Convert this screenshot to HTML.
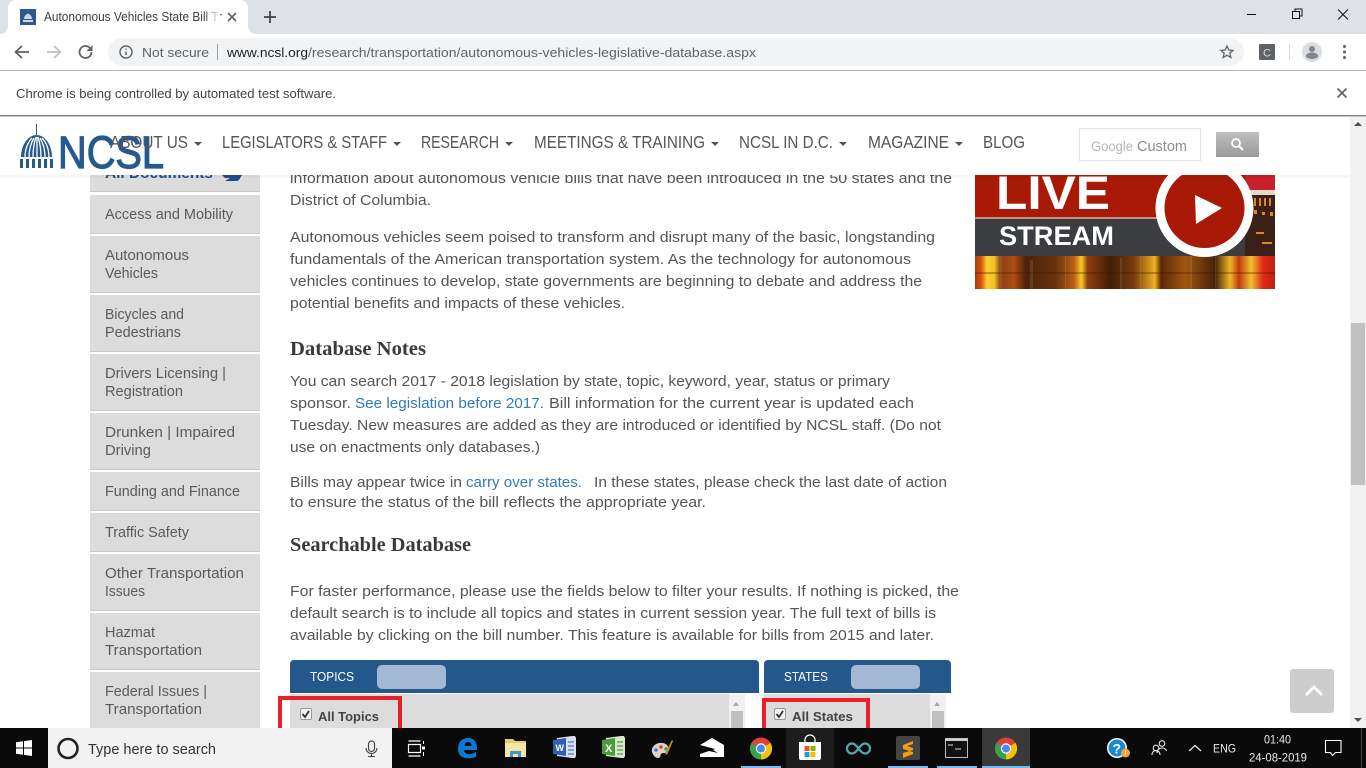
<!DOCTYPE html>
<html lang="en"><head><meta charset="utf-8"><title>Autonomous Vehicles State Bill Tracking</title>
<style>
html,body{margin:0;padding:0;width:1366px;height:768px;overflow:hidden;background:#fff}
svg{display:block}
text{font-family:"Liberation Sans",Arial,sans-serif;white-space:pre}
.b{font-size:15px;fill:#555}
.l{fill:#337ab7}
.s{font-size:14.5px;fill:#5a5a5a}
.h{font-family:"Liberation Serif",serif;font-weight:bold;font-size:20px;fill:#3a3a3a}
.n{font-size:17.5px;fill:#555}
.u{font-size:13px;fill:#5f6368}
.t{fill:#e8e8e8;font-size:12px}
</style></head><body>
<svg width="1366" height="768" viewBox="0 0 1366 768" xmlns="http://www.w3.org/2000/svg">
<defs>
<linearGradient id="refl" x1="0" x2="1" y1="0" y2="0">
<stop offset="0" stop-color="#a83c08"/><stop offset=".02" stop-color="#d85010"/><stop offset=".04" stop-color="#f8d030"/><stop offset=".065" stop-color="#f0c020"/><stop offset=".085" stop-color="#8a4010"/><stop offset=".13" stop-color="#b04c14"/><stop offset=".17" stop-color="#4c220a"/><stop offset=".27" stop-color="#6a320e"/><stop offset=".33" stop-color="#b86014"/><stop offset=".355" stop-color="#f8c828"/><stop offset=".375" stop-color="#903e0e"/><stop offset=".45" stop-color="#421e06"/><stop offset=".53" stop-color="#7a3c0e"/><stop offset=".6" stop-color="#f0b020"/><stop offset=".62" stop-color="#5a2806"/><stop offset=".7" stop-color="#a0560e"/><stop offset=".8" stop-color="#46220a"/><stop offset=".85" stop-color="#f0b824"/><stop offset=".88" stop-color="#c03a10"/><stop offset=".92" stop-color="#f0c030"/><stop offset=".96" stop-color="#e02818"/><stop offset="1" stop-color="#c02010"/>
</linearGradient>
<linearGradient id="btn" x1="0" x2="0" y1="0" y2="1"><stop offset="0" stop-color="#c0c0c0"/><stop offset="1" stop-color="#9a9a9a"/></linearGradient>
<linearGradient id="fade" x1="0" x2="1" y1="0" y2="0"><stop offset="0" stop-color="#fff" stop-opacity="0"/><stop offset="1" stop-color="#fff"/></linearGradient>
<clipPath id="liveclip"><rect x="975" y="175" width="300" height="114"/></clipPath>
</defs>

<!-- page -->
<rect x="0" y="116" width="1366" height="612" fill="#fff"/>

<!-- sidebar -->
<g fill="#dcdcdc">
<rect x="90" y="150" width="170" height="42"/>
<rect x="90" y="195" width="170" height="39"/>
<rect x="90" y="236" width="170" height="57"/>
<rect x="90" y="295" width="170" height="57"/>
<rect x="90" y="354" width="170" height="57"/>
<rect x="90" y="413" width="170" height="57"/>
<rect x="90" y="472" width="170" height="39"/>
<rect x="90" y="513" width="170" height="39"/>
<rect x="90" y="554" width="170" height="57"/>
<rect x="90" y="613" width="170" height="57"/>
<rect x="90" y="672" width="170" height="56"/>
</g>
<g fill="#c9c9c9">
<rect x="90" y="191" width="170" height="1"/><rect x="90" y="233" width="170" height="1"/><rect x="90" y="292" width="170" height="1"/><rect x="90" y="351" width="170" height="1"/><rect x="90" y="410" width="170" height="1"/><rect x="90" y="469" width="170" height="1"/><rect x="90" y="510" width="170" height="1"/><rect x="90" y="551" width="170" height="1"/><rect x="90" y="610" width="170" height="1"/><rect x="90" y="669" width="170" height="1"/>
</g>
<text x="105" y="178" font-size="15" font-weight="bold" fill="#1f4e84" textLength="108" lengthAdjust="spacingAndGlyphs">All Documents</text>
<path d="M222 175h20l-3 5-2 1h-12l5-3h-5z" fill="#1f4e84"/>
<g class="s">
<text class="s" x="105" y="219" textLength="128" lengthAdjust="spacingAndGlyphs">Access and Mobility</text>
<text class="s" x="105" y="260" textLength="84" lengthAdjust="spacingAndGlyphs">Autonomous</text>
<text class="s" x="105" y="278" textLength="53" lengthAdjust="spacingAndGlyphs">Vehicles</text>
<text class="s" x="105" y="319" textLength="79" lengthAdjust="spacingAndGlyphs">Bicycles and</text>
<text class="s" x="105" y="337" textLength="76" lengthAdjust="spacingAndGlyphs">Pedestrians</text>
<text class="s" x="105" y="378" textLength="121" lengthAdjust="spacingAndGlyphs">Drivers Licensing |</text>
<text class="s" x="105" y="396" textLength="78" lengthAdjust="spacingAndGlyphs">Registration</text>
<text class="s" x="105" y="437" textLength="130" lengthAdjust="spacingAndGlyphs">Drunken | Impaired</text>
<text class="s" x="105" y="455" textLength="46" lengthAdjust="spacingAndGlyphs">Driving</text>
<text class="s" x="105" y="496" textLength="135" lengthAdjust="spacingAndGlyphs">Funding and Finance</text>
<text class="s" x="105" y="537" textLength="84" lengthAdjust="spacingAndGlyphs">Traffic Safety</text>
<text class="s" x="105" y="578" textLength="139" lengthAdjust="spacingAndGlyphs">Other Transportation</text>
<text class="s" x="105" y="596" textLength="40" lengthAdjust="spacingAndGlyphs">Issues</text>
<text class="s" x="105" y="637" textLength="50" lengthAdjust="spacingAndGlyphs">Hazmat</text>
<text class="s" x="105" y="655" textLength="97" lengthAdjust="spacingAndGlyphs">Transportation</text>
<text class="s" x="105" y="696" textLength="102" lengthAdjust="spacingAndGlyphs">Federal Issues |</text>
<text class="s" x="105" y="714" textLength="97" lengthAdjust="spacingAndGlyphs">Transportation</text>
</g>

<!-- body -->
<text class="b" x="290" y="183" textLength="662" lengthAdjust="spacingAndGlyphs">information about autonomous vehicle bills that have been introduced in the 50 states and the</text>
<text class="b" x="290" y="205" textLength="141" lengthAdjust="spacingAndGlyphs">District of Columbia.</text>
<text class="b" x="290" y="242" textLength="645" lengthAdjust="spacingAndGlyphs">Autonomous vehicles seem poised to transform and disrupt many of the basic, longstanding</text>
<text class="b" x="290" y="264" textLength="621" lengthAdjust="spacingAndGlyphs">fundamentals of the American transportation system. As the technology for autonomous</text>
<text class="b" x="290" y="286" textLength="632" lengthAdjust="spacingAndGlyphs">vehicles continues to develop, state governments are beginning to debate and address the</text>
<text class="b" x="290" y="308" textLength="335" lengthAdjust="spacingAndGlyphs">potential benefits and impacts of these vehicles.</text>
<text class="h" x="290" y="355" textLength="136" lengthAdjust="spacingAndGlyphs">Database Notes</text>
<text class="b" x="290" y="386" textLength="600" lengthAdjust="spacingAndGlyphs">You can search 2017 - 2018 legislation by state, topic, keyword, year, status or primary</text>
<text class="b" x="290" y="408" textLength="61" lengthAdjust="spacingAndGlyphs">sponsor.</text>
<text class="b l" x="355" y="408" textLength="189" lengthAdjust="spacingAndGlyphs">See legislation before 2017.</text>
<text class="b" x="549" y="408" textLength="365" lengthAdjust="spacingAndGlyphs">Bill information for the current year is updated each</text>
<text class="b" x="290" y="430" textLength="651" lengthAdjust="spacingAndGlyphs">Tuesday. New measures are added as they are introduced or identified by NCSL staff. (Do not</text>
<text class="b" x="290" y="452" textLength="250" lengthAdjust="spacingAndGlyphs">use on enactments only databases.)</text>
<text class="b" x="290" y="487" textLength="172" lengthAdjust="spacingAndGlyphs">Bills may appear twice in</text>
<text class="b l" x="466" y="487" textLength="116" lengthAdjust="spacingAndGlyphs">carry over states.</text>
<text class="b" x="594" y="487" textLength="353" lengthAdjust="spacingAndGlyphs">In these states, please check the last date of action</text>
<text class="b" x="290" y="507" textLength="416" lengthAdjust="spacingAndGlyphs">to ensure the status of the bill reflects the appropriate year.</text>
<text class="h" x="290" y="551" textLength="181" lengthAdjust="spacingAndGlyphs">Searchable Database</text>
<text class="b" x="290" y="596" textLength="669" lengthAdjust="spacingAndGlyphs">For faster performance, please use the fields below to filter your results. If nothing is picked, the</text>
<text class="b" x="290" y="618" textLength="646" lengthAdjust="spacingAndGlyphs">default search is to include all topics and states in current session year. The full text of bills is</text>
<text class="b" x="290" y="640" textLength="644" lengthAdjust="spacingAndGlyphs">available by clicking on the bill number. This feature is available for bills from 2015 and later.</text>

<!-- filter panels -->
<path d="M290 693v-29a4 4 0 0 1 4-4h461a4 4 0 0 1 4 4v29z" fill="#24578c"/>
<path d="M764 693v-29a4 4 0 0 1 4-4h179a4 4 0 0 1 4 4v29z" fill="#24578c"/>
<rect x="377" y="665" width="69" height="24" rx="5" fill="#a3b8d3"/>
<rect x="851" y="665" width="69" height="24" rx="5" fill="#a3b8d3"/>
<text x="310" y="681" font-size="13" fill="#fff" textLength="44" lengthAdjust="spacingAndGlyphs">TOPICS</text>
<text x="784" y="681" font-size="13" fill="#fff" textLength="44" lengthAdjust="spacingAndGlyphs">STATES</text>
<rect x="290" y="694" width="439" height="34" fill="#dcdcdc"/>
<rect x="729" y="694" width="16" height="34" fill="#f1f1f1"/>
<rect x="731" y="711" width="12" height="17" fill="#c0c0c0"/>
<path d="M733 706l3-4 3 4z" fill="#a8a8a8"/>
<rect x="764" y="694" width="166" height="34" fill="#dcdcdc"/>
<rect x="930" y="694" width="16" height="34" fill="#f1f1f1"/>
<rect x="932" y="711" width="12" height="17" fill="#c0c0c0"/>
<path d="M934 706l3-4 3 4z" fill="#a8a8a8"/>
<rect x="300.500" y="708.500" width="11" height="11" rx="1.500" fill="#f2f2f2" stroke="#9a9a9a"/>
<path d="M302.500 714l2.500 3 4-6" fill="none" stroke="#333" stroke-width="1.800"/>
<rect x="774.500" y="708.500" width="11" height="11" rx="1.500" fill="#f2f2f2" stroke="#9a9a9a"/>
<path d="M776.500 714l2.500 3 4-6" fill="none" stroke="#333" stroke-width="1.800"/>
<text x="318" y="721" font-size="13" font-weight="bold" fill="#444" textLength="61" lengthAdjust="spacingAndGlyphs">All Topics</text>
<text x="792" y="721" font-size="13" font-weight="bold" fill="#444" textLength="61" lengthAdjust="spacingAndGlyphs">All States</text>
<rect x="280" y="698" width="120" height="32" fill="none" stroke="#e8202a" stroke-width="4"/>
<rect x="764" y="700" width="104" height="30" fill="none" stroke="#e8202a" stroke-width="4"/>

<!-- live stream -->
<g clip-path="url(#liveclip)">
<rect x="975" y="175" width="300" height="42" fill="#a81a06"/>
<rect x="1245" y="175" width="30" height="15" fill="#c8202a"/>
<rect x="975" y="217" width="240" height="2" fill="#c89088"/>
<rect x="975" y="219" width="280" height="37" fill="#3b3d40"/>
<rect x="1245" y="190" width="30" height="66" fill="#3a2018"/>
<rect x="1250" y="190" width="25" height="5" fill="#e8d8c8"/>
<g fill="#e08820"><rect x="1254" y="198" width="2" height="8"/><rect x="1259" y="198" width="2" height="8"/><rect x="1264" y="198" width="2" height="8"/><rect x="1269" y="198" width="2" height="8"/><rect x="1254" y="210" width="3" height="4"/><rect x="1262" y="212" width="3" height="3"/><rect x="1270" y="212" width="3" height="4"/><rect x="1256" y="232" width="8" height="2"/><rect x="1262" y="242" width="10" height="2"/></g>
<rect x="975" y="256" width="300" height="33" fill="url(#refl)"/>
<g fill="#fff" opacity=".1"><rect x="1000" y="256" width="2" height="33"/><rect x="1030" y="260" width="3" height="29"/><rect x="1065" y="256" width="1" height="33"/><rect x="1120" y="258" width="2" height="31"/><rect x="1140" y="256" width="1" height="33"/><rect x="1190" y="256" width="2" height="33"/><rect x="1215" y="256" width="1" height="33"/></g>
<rect x="975" y="272" width="300" height="2" fill="#401800" opacity=".3"/>
<text x="996" y="209" font-size="47" font-weight="bold" fill="#fff" textLength="114" lengthAdjust="spacingAndGlyphs">LIVE</text>
<text x="999" y="245" font-size="27" font-weight="bold" fill="#fff" textLength="115" lengthAdjust="spacingAndGlyphs">STREAM</text>
<circle cx="1204.500" cy="208" r="44.500" fill="#a81a06" stroke="#fff" stroke-width="9"/>
<path d="M1195 195l27 13-26 16z" fill="#fff"/>
</g>

<!-- header -->
<rect x="0" y="175" width="1350" height="3" fill="#000" opacity=".03"/>
<rect x="0" y="116" width="1350" height="59" fill="#fff"/>
<!-- logo -->
<g fill="#265a8f">
<rect x="36" y="124" width="1" height="11"/>
<path d="M21 157a15.500 22 0 0 1 31 0z"/>
</g>
<g stroke="#fff" stroke-width="1.300"><path d="M25 157c0-8 3-15 7-19M29 157c0-8 2-14 5-19M33 157c0-8 1-14 3-20M37 157c0-8 0-14 0-20M41 157c0-8-1-14-3-20M45 157c0-8-2-14-5-19M49 157c0-8-3-15-7-19" fill="none"/></g>
<g fill="#265a8f"><rect x="20" y="159" width="3" height="9"/><rect x="26" y="159" width="3" height="9"/><rect x="32" y="159" width="3" height="9"/><rect x="38" y="159" width="3" height="9"/><rect x="44" y="159" width="3" height="9"/><rect x="50" y="159" width="3" height="9"/></g>
<text x="58" y="168" font-size="45" fill="#265a8f" stroke="#265a8f" stroke-width="1.200" textLength="106" lengthAdjust="spacingAndGlyphs">NCSL</text>
<!-- nav -->
<text class="n" x="110" y="148" textLength="78" lengthAdjust="spacingAndGlyphs">ABOUT US</text><path d="M194 142h8l-4 4z" fill="#555"/>
<text class="n" x="222" y="148" textLength="165" lengthAdjust="spacingAndGlyphs">LEGISLATORS &amp; STAFF</text><path d="M393 142h8l-4 4z" fill="#555"/>
<text class="n" x="421" y="148" textLength="78" lengthAdjust="spacingAndGlyphs">RESEARCH</text><path d="M505 142h8l-4 4z" fill="#555"/>
<text class="n" x="534" y="148" textLength="171" lengthAdjust="spacingAndGlyphs">MEETINGS &amp; TRAINING</text><path d="M711 142h8l-4 4z" fill="#555"/>
<text class="n" x="739" y="148" textLength="94" lengthAdjust="spacingAndGlyphs">NCSL IN D.C.</text><path d="M839 142h8l-4 4z" fill="#555"/>
<text class="n" x="868" y="148" textLength="81" lengthAdjust="spacingAndGlyphs">MAGAZINE</text><path d="M955 142h8l-4 4z" fill="#555"/>
<text class="n" x="983" y="148" textLength="42" lengthAdjust="spacingAndGlyphs">BLOG</text>
<rect x="1079.500" y="128.500" width="121" height="32" fill="#fff" stroke="#e2e2e2"/>
<text x="1091" y="151" font-size="13.500" fill="#b5b5b5" textLength="42" lengthAdjust="spacingAndGlyphs">Google</text>
<text x="1137" y="151" font-size="14.500" fill="#8e8e8e" textLength="50" lengthAdjust="spacingAndGlyphs">Custom</text>
<rect x="1216" y="132" width="43" height="25" fill="url(#btn)"/>
<circle cx="1236" cy="143" r="4" fill="none" stroke="#fff" stroke-width="1.800"/><path d="M1239 146l4 4" stroke="#fff" stroke-width="2.200"/>

<!-- page scrollbar -->
<rect x="1350" y="116" width="16" height="612" fill="#f1f1f1"/>
<rect x="1351" y="323" width="14" height="162" fill="#c1c1c1"/>
<path d="M1354 126l4-4 4 4z" fill="#505050"/>
<path d="M1354 718l4 4 4-4z" fill="#505050"/>
<rect x="1290" y="669" width="44" height="44" rx="3" fill="#cdcdcd"/>
<path d="M1306 695l8-8 8 8" fill="none" stroke="#fff" stroke-width="2.800"/>

<!-- chrome: tab strip -->
<rect x="0" y="0" width="1366" height="34" fill="#dee1e6"/>
<path d="M0 34a8 8 0 0 0 8-8V8a8 8 0 0 1 8-8h224a8 8 0 0 1 8 8v18a8 8 0 0 0 8 8z" fill="#fff"/>
<rect x="20" y="9" width="16" height="16" fill="#2c5a8f"/>
<path d="M23 22v-2h10v2zM24 19a4 5 0 0 1 8 0zM27.700 13h.6v2h-.6z" fill="#cfd9e6"/>
<text x="44" y="21" font-size="12.500" fill="#3c4043" textLength="178" lengthAdjust="spacingAndGlyphs">Autonomous Vehicles State Bill Tr</text>
<rect x="204" y="6" width="16" height="22" fill="url(#fade)"/>
<path d="M228 13l8 8M236 13l-8 8" stroke="#5f6368" stroke-width="1.600"/>
<path d="M270 11v12M264 17h12" stroke="#3c4043" stroke-width="1.700"/>
<path d="M1247 14.500h9" stroke="#111" stroke-width="1"/>
<path d="M1292.500 11.500h7v7h-7zM1295 11.500v-2.500h7v7h-2.500" fill="none" stroke="#111" stroke-width="1"/>
<path d="M1338 9.500l10 10M1348 9.500l-10 10" stroke="#111" stroke-width="1"/>

<!-- toolbar -->
<rect x="0" y="34" width="1366" height="36" fill="#fff"/>
<path d="M29 52H16M22 46l-6.500 6 6.500 6" fill="none" stroke="#5f6368" stroke-width="1.800"/>
<path d="M47 52h13M54 46l6.500 6-6.500 6" fill="none" stroke="#bdc1c6" stroke-width="1.800"/>
<path d="M91.500 52a6 6 0 1 1-1.800-4.300" fill="none" stroke="#5f6368" stroke-width="1.800"/><path d="M92.500 45v6h-6z" fill="#5f6368"/>
<rect x="108" y="38" width="1136" height="28" rx="14" fill="#f1f3f4"/>
<circle cx="126" cy="52" r="6" fill="none" stroke="#5f6368" stroke-width="1.400"/>
<path d="M126 51.500v3.500M126 48.500v1.300" stroke="#5f6368" stroke-width="1.400"/>
<text class="u" x="142" y="57" textLength="67" lengthAdjust="spacingAndGlyphs">Not secure</text>
<rect x="217" y="44" width="1" height="16" fill="#9aa0a6"/>
<text x="227" y="57" font-size="13" fill="#202124" textLength="81" lengthAdjust="spacingAndGlyphs">www.ncsl.org</text>
<text class="u" x="308" y="57" textLength="448" lengthAdjust="spacingAndGlyphs">/research/transportation/autonomous-vehicles-legislative-database.aspx</text>
<path d="M1227 46l1.800 4 4.200.4-3.200 2.800 1 4.300-3.800-2.300-3.800 2.300 1-4.300-3.200-2.800 4.200-.4z" fill="none" stroke="#5f6368" stroke-width="1.300"/>
<rect x="1259" y="44" width="16" height="16" rx="1" fill="#5f6368"/>
<text x="1263" y="56.500" font-size="11" fill="#ddd">C</text>
<rect x="1289" y="44" width="1" height="16" fill="#dadce0"/>
<circle cx="1312" cy="52" r="10" fill="#dadce0"/>
<circle cx="1312" cy="49" r="3" fill="#80868b"/><path d="M1306 56a6 3.500 0 0 1 12 0 6 3 0 0 1-12 0z" fill="#80868b"/>
<g fill="#5f6368"><circle cx="1344.500" cy="46.500" r="1.500"/><circle cx="1344.500" cy="52" r="1.500"/><circle cx="1344.500" cy="57.500" r="1.500"/></g>
<rect x="0" y="70" width="1366" height="1" fill="#b3b3b3"/>

<!-- infobar -->
<rect x="0" y="71" width="1366" height="44" fill="#fff"/>
<text x="16" y="98" font-size="12.500" fill="#444" textLength="320" lengthAdjust="spacingAndGlyphs">Chrome is being controlled by automated test software.</text>
<path d="M1337.500 88.500l9 9M1346.500 88.500l-9 9" stroke="#5f6368" stroke-width="1.700"/>
<rect x="0" y="115" width="1366" height="1" fill="#808080"/>
<rect x="0" y="116" width="1366" height="1" fill="#c8c8c8"/>

<!-- taskbar -->
<rect x="0" y="728" width="1366" height="40" fill="#0a0a0a"/>
<g fill="#fff"><path d="M16 742.300l7-1v6.200h-7zM24 741.100l8-1.100v7.500h-8zM16 748.500h7v6.200l-7-1zM24 748.500h8v7.500l-8-1.100z"/></g>
<rect x="48" y="728" width="344" height="40" fill="#f2f2f2"/>
<circle cx="68" cy="748.500" r="9.500" fill="none" stroke="#222" stroke-width="2.600"/>
<text x="88" y="754" font-size="14.500" fill="#333" textLength="128" lengthAdjust="spacingAndGlyphs">Type here to search</text>
<rect x="368.500" y="741" width="6" height="10.500" rx="3" fill="none" stroke="#444" stroke-width="1.200"/><path d="M366 748a5.500 5.500 0 0 0 11 0M371.500 753.500v2.500M368 756.500h7" fill="none" stroke="#444" stroke-width="1.100"/>
<!-- task view -->
<path d="M408.500 744.500h12v8h-12zM408.500 741h12M408.500 756h12" fill="none" stroke="#fff" stroke-width="1.200"/><rect x="422" y="746.500" width="3" height="3" fill="#fff"/><path d="M423.500 741v3M423.500 752v4" stroke="#fff" stroke-width="1"/>
<rect x="786" y="728" width="48" height="40" fill="#1d1d1d"/>
<rect x="982" y="728" width="48" height="40" fill="#3a3a3a"/>
<g fill="#76b9ed"><rect x="741" y="766" width="40" height="2"/><rect x="888" y="766" width="40" height="2"/><rect x="937" y="766" width="40" height="2"/><rect x="982" y="766" width="48" height="2"/></g>
<!-- edge -->
<path d="M458 749c0-7 4-11 10-11 6 0 9 4 9 10v2h-13c.5 4.500 6 5.500 12 2v5c-9 3-18 1-18-8zm6.500-3h7c0-2.500-1.500-4-3.500-4-2 0-3 1.500-3.500 4z" fill="#0a78d7" fill-rule="evenodd"/>
<!-- explorer -->
<path d="M505 739h8l2 2h11v16h-21z" fill="#e8c870"/><rect x="505" y="743" width="21" height="14" fill="#f8e4a4"/><path d="M510 757v-6h11v6h-3v-3h-5v3z" fill="#3a9ad0"/>
<!-- word -->
<path d="M557 738l15-2h3l1 2v18l-1 2h-3l-15-2z" fill="#d6e0f2"/><path d="M553 740l13-2v18l-13-2z" fill="#2f5fae"/><text x="555.500" y="751" font-size="9" font-weight="bold" fill="#fff">W</text><path d="M568 742h6M568 746h6M568 750h6M568 754h6" stroke="#2f5fae"/>
<!-- excel -->
<path d="M606 738l15-2h3l1 2v18l-1 2h-3l-15-2z" fill="#d6ebcc"/><path d="M602 740l13-2v18l-13-2z" fill="#4b9a3c"/><text x="605" y="752" font-size="11" font-weight="bold" fill="#fff">X</text><path d="M617 742h6M617 746h6M617 750h6M617 754h6" stroke="#3a8a2c"/>
<!-- paint -->
<path d="M652 752c-1-6 5-10 11-9 5 1 7 6 4 9-2 2-4 0-6 2-1 1 0 4-3 4-3 0-5-3-6-6z" fill="#d8d4cc"/><circle cx="656" cy="750" r="1.700" fill="#3a7ad0"/><circle cx="661" cy="747" r="1.700" fill="#d04030"/><circle cx="666" cy="749" r="1.700" fill="#40a050"/><path d="M665 753l7-13 1 1-6 14z" fill="#c89030"/>
<!-- mail -->
<path d="M700 745l12-7 12 7v12h-24z" fill="#fff"/><path d="M700 745l15 4-2 1 5 3-9-2-9 3z" fill="#0a0a0a"/>
<!-- chrome icons -->
<g><circle cx="761" cy="748.500" r="11" fill="#e0413a"/><path d="M761 748.500l-9.500 5.500a11 11 0 0 0 9.500 5.500z" fill="#35a350"/><path d="M761 748.500l0 11a11 11 0 0 0 9.500-16.500z" fill="#f4c20d"/><path d="M761 748.500l9.500-5.500a11 11 0 0 1 0 11z" fill="#f4c20d"/><path d="M761 748.500l-9.500 5.500a11 11 0 0 1 0-11z" fill="#35a350"/><circle cx="761" cy="748.500" r="5.200" fill="#fff"/><circle cx="761" cy="748.500" r="4" fill="#4a8af4"/></g>
<g><circle cx="1006" cy="748.500" r="11" fill="#e0413a"/><path d="M1006 748.500l-9.500 5.500a11 11 0 0 0 9.500 5.500z" fill="#35a350"/><path d="M1006 748.500l0 11a11 11 0 0 0 9.500-16.500z" fill="#f4c20d"/><path d="M1006 748.500l9.500-5.500a11 11 0 0 1 0 11z" fill="#f4c20d"/><path d="M1006 748.500l-9.500 5.500a11 11 0 0 1 0-11z" fill="#35a350"/><circle cx="1006" cy="748.500" r="5.200" fill="#fff"/><circle cx="1006" cy="748.500" r="4" fill="#4a8af4"/></g>
<!-- store -->
<path d="M799 742h22v16a2 2 0 0 1-2 2h-18a2 2 0 0 1-2-2z" fill="#fff"/><path d="M805 742v-2a5 5 0 0 1 10 0v2" fill="none" stroke="#fff" stroke-width="1.300"/>
<rect x="804.500" y="746" width="5" height="5" fill="#f25022"/><rect x="810.500" y="746" width="5" height="5" fill="#7fba00"/><rect x="804.500" y="752" width="5" height="5" fill="#00a4ef"/><rect x="810.500" y="752" width="5" height="5" fill="#ffb900"/>
<!-- arduino -->
<path d="M858.500 748.500c-3-4-4.500-5-6.500-5a5 5 0 0 0 0 10c2 0 3.500-1 6.500-5zm0 0c3-4 4.500-5 6.500-5a5 5 0 0 1 0 10c-2 0-3.500-1-6.500-5z" fill="none" stroke="#55a9ad" stroke-width="2.200"/>
<!-- sublime -->
<rect x="896" y="736" width="24" height="24" rx="2" fill="#444"/><path d="M913 741l-10 4v4l10 3v-4l-6-2 6-2zM903 749v4l10-3v4l-10 4v-4" fill="#f59a16"/>
<!-- cmd -->
<rect x="945.500" y="738.500" width="22" height="19" fill="#111" stroke="#bbb"/><rect x="945.500" y="738.500" width="22" height="2.500" fill="#ccc"/><path d="M948 745h5M955 749h6" stroke="#ddd" stroke-width="1"/>
<!-- tray -->
<circle cx="1117" cy="748" r="10" fill="#fff"/><circle cx="1117" cy="748" r="8.500" fill="#1a8ad0"/>
<text x="1112.500" y="753.500" font-size="14" font-weight="bold" fill="#fff">?</text>
<circle cx="1125.500" cy="753" r="4.500" fill="#f0a830"/><rect x="1125" y="750.500" width="1" height="4" fill="#fff"/>
<g fill="none" stroke="#e8e8e8" stroke-width="1.100"><circle cx="1162" cy="743.500" r="2.800"/><path d="M1157 753c0-3 2-5 5-5s4 1 4.500 3"/><circle cx="1156" cy="748" r="2.800"/><path d="M1152 755c0-3 2-4.500 4-4.500s4 1.500 4 4.500"/></g>
<path d="M1189 751l6-5.500 6 5.500" fill="none" stroke="#e8e8e8" stroke-width="1.200"/>
<text class="t" x="1213" y="752.500" textLength="23" lengthAdjust="spacingAndGlyphs">ENG</text>
<text class="t" x="1264" y="743.500" textLength="27" lengthAdjust="spacingAndGlyphs">01:40</text>
<text class="t" x="1249" y="761.500" textLength="58" lengthAdjust="spacingAndGlyphs">24-08-2019</text>
<path d="M1325.500 740.500h15.500v12h-5.500l-3 3-2-3h-5z" fill="none" stroke="#fff" stroke-width="1.100"/>
<rect x="1361" y="728" width="1" height="40" fill="#444"/>
</svg>
</body></html>
